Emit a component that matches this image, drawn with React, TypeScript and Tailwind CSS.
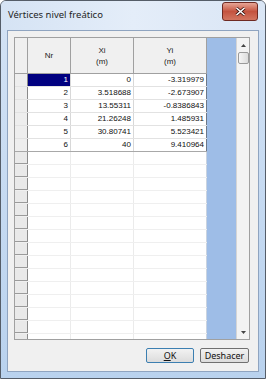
const rows = [
  { nr: "1", x: "0", y: "-3.319979" },
  { nr: "2", x: "3.518688", y: "-2.673907" },
  { nr: "3", x: "13.55311", y: "-0.8386843" },
  { nr: "4", x: "21.26248", y: "1.485931" },
  { nr: "5", x: "30.80741", y: "5.523421" },
  { nr: "6", x: "40", y: "9.410964" },
]

const emptyRows = Array.from({ length: 16 })

function HeaderCell({ w, lines }: { w: string; lines: string[] }) {
  return (
    <div
      className={`${w} h-full flex flex-col items-center justify-center border-r border-[#a0a0a0] bg-[#f0f0f0] text-[#222] leading-[11px]`}
    >
      {lines.map((l) => (
        <span key={l}>{l}</span>
      ))}
    </div>
  )
}

export default function App() {
  return (
    <div className="w-[266px] h-[379px] relative overflow-hidden rounded-t-[6px] border border-[#555d68] bg-gradient-to-b from-[#d4e3f5] to-[#b9d2ee] font-['Liberation_Sans',sans-serif]">
      {/* title bar */}
      <div className="h-[29px] flex items-center pl-[7px] pb-[1px] bg-gradient-to-r from-[#d5e3f4] via-[#e4edf9] to-[#dae6f5]">
        <span className="font-['Noto_Sans',sans-serif] text-[9.5px] text-[#1e1e1e]">Vértices nivel freático</span>
      </div>
      <div className="absolute right-[7px] top-[1px] w-[36px] h-[19px] rounded-[3px] border border-[#6e2a22] bg-gradient-to-b from-[#e6a596] via-[#c4533f] to-[#d27560] flex items-center justify-center">
        <svg width="11" height="9" viewBox="0 0 11 9">
          <path d="M1.5 1 L9.5 8 M9.5 1 L1.5 8" stroke="#3a1410" strokeWidth="3" />
          <path d="M1.5 1 L9.5 8 M9.5 1 L1.5 8" stroke="#ffffff" strokeWidth="1.6" />
        </svg>
      </div>

      {/* client area */}
      <div className="ml-[6px] w-[252px] h-[342px] border border-[#8fa4c0] bg-[#f0f0f0] flex flex-col pl-[6px] pt-[6px]">
        <div className="w-[236px] h-[303px] border border-[#a0a0a0] flex overflow-hidden bg-white">
          <div className="w-[192px] flex flex-col text-[8px]">
            {/* header */}
            <div className="h-[36px] flex border-b border-[#a0a0a0] shrink-0">
              <div className="w-[13px] h-full border-r border-[#a0a0a0] bg-[#f0f0f0]" />
              <HeaderCell w="w-[43px]" lines={["Nr"]} />
              <HeaderCell w="w-[63px]" lines={["Xi", "(m)"]} />
              <HeaderCell w="w-[73px]" lines={["Yi", "(m)"]} />
            </div>
            {rows.map((r, i) => (
              <div
                key={r.nr}
                className={`h-[13px] flex shrink-0 border-b ${i === rows.length - 1 ? "border-[#a8a8a8]" : "border-[#e2e2e2]"} text-[#111]`}
              >
                <div className="w-[13px] h-full bg-[#eeeeee] border-r border-[#8a8a8a]" />
                <div
                  className={`w-[43px] h-full flex items-center justify-end pr-[2px] border-r border-[#d8d8d8] ${i === 0 ? "bg-[#000080] text-white" : ""}`}
                >
                  {r.nr}
                </div>
                <div className="w-[63px] h-full flex items-center justify-end pr-[2px] border-r border-[#d8d8d8]">{r.x}</div>
                <div className="w-[73px] h-full flex items-center justify-end pr-[2px] border-r border-[#6d7888]">{r.y}</div>
              </div>
            ))}
            {emptyRows.map((_, i) => (
              <div key={i} className="h-[13px] flex shrink-0 border-b border-[#efefef]">
                <div className="w-[13px] h-full bg-[#e9e9e9] border-r border-[#8a8a8a] border-b border-b-[#9a9a9a]" />
                <div className="w-[43px] h-full border-r border-[#ebebeb]" />
                <div className="w-[63px] h-full border-r border-[#ebebeb]" />
                <div className="w-[73px] h-full border-r border-[#c9d3e0]" />
              </div>
            ))}
          </div>
          <div className="w-[29px] h-full bg-[#9ebde7]" />
          {/* scrollbar */}
          <div className="w-[13px] h-full border-l border-[#d5d5d5] bg-[#f3f3f3] flex flex-col items-center">
            <div className="h-[14px] w-full flex items-center justify-center">
              <svg width="5" height="3" viewBox="0 0 5 3">
                <path d="M0 3 L2.5 0 L5 3 Z" fill="#444" />
              </svg>
            </div>
            <div className="w-[11px] h-[12px] rounded-[2px] border border-[#9a9a9a] bg-gradient-to-r from-[#f6f6f6] to-[#dcdcdc]" />
            <div className="flex-1" />
            <div className="h-[14px] w-full flex items-center justify-center">
              <svg width="5" height="3" viewBox="0 0 5 3">
                <path d="M0 0 L5 0 L2.5 3 Z" fill="#444" />
              </svg>
            </div>
          </div>
        </div>

        {/* buttons */}
        <div className="flex justify-end gap-[6px] pr-[9px] mt-[8px] font-['Noto_Sans',sans-serif] text-[9px] text-[#111]">
          <button className="w-[48px] h-[15px] rounded-[2px] border border-[#3c7fb1] bg-gradient-to-b from-[#f2f2f2] to-[#dcdcdc] flex items-center justify-center leading-none">
            <span>
              <span className="underline">O</span>K
            </span>
          </button>
          <button className="w-[49px] h-[15px] rounded-[2px] border border-[#707070] bg-gradient-to-b from-[#f2f2f2] to-[#dcdcdc] flex items-center justify-center leading-none">
            Deshacer
          </button>
        </div>
      </div>
    </div>
  )
}
